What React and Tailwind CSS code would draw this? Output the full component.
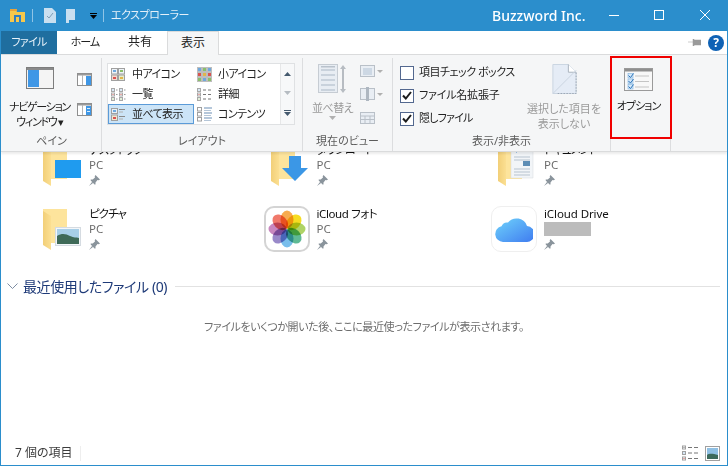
import React from 'react';

const FONT = 'font-["Noto_Sans","Noto_Sans_CJK_JP",sans-serif] [font-feature-settings:"palt"]';

const Group = ({ label, width, children }) => (
    <div className={`${width} mt-[3px] flex flex-col border-r border-[#dcdddf]`}>
        <div className="flex-1 flex min-h-0">{children}</div>
        <div className="h-[20px] text-center text-[11px] leading-[20px] text-[#5c5c5c]">{label}</div>
    </div>
);

const PaneBig = () => (
    <svg width="28" height="22" viewBox="0 0 28 22">
        <rect x="0.5" y="0.5" width="27" height="21" fill="#f4f4f4" stroke="#7d7d7d" />
        <rect x="1" y="1" width="26" height="2" fill="#8a8a8a" />
        <rect x="2" y="3" width="11" height="17" fill="#3f97e6" />
    </svg>
);

const PaneSmall = ({ lines }) => (
    <svg width="15" height="13" viewBox="0 0 15 13">
        <rect x="0.5" y="0.5" width="14" height="12" fill="#fff" stroke="#8f8f8f" />
        <rect x="1" y="1" width="13" height="1.5" fill="#9a9a9a" />
        <rect x="5" y="2" width="1" height="10" fill="#b5b5b5" />
        <rect x="9" y="3" width="5" height="9" fill="#3f97e6" />
        {lines && <rect x="10" y="5" width="3" height="1" fill="#d9ecfb" />}
        {lines && <rect x="10" y="8" width="3" height="1" fill="#d9ecfb" />}
    </svg>
);

const LayoutIcon = ({ kind }) => {
    const c = ['#6fa8dc', '#d9534f', '#8bbf6a', '#e0b64c'];
    if (kind === 'medium') {
        return (
            <svg width="14" height="13" viewBox="0 0 14 13">
                <rect x="0.5" y="0.5" width="6" height="5.5" fill="#eef3f8" stroke="#a0a0a0" />
                <rect x="7.5" y="0.5" width="6" height="5.5" fill="#eef3f8" stroke="#a0a0a0" />
                <rect x="0.5" y="7" width="6" height="5.5" fill="#f3d9d0" stroke="#a0a0a0" />
                <rect x="7.5" y="7" width="6" height="5.5" fill="#e6eccb" stroke="#a0a0a0" />
                <rect x="2" y="2" width="3" height="2" fill={c[0]} />
                <rect x="9" y="2" width="3" height="2" fill={c[2]} />
                <rect x="2" y="9" width="3" height="2" fill={c[1]} />
                <rect x="9" y="9" width="3" height="2" fill={c[3]} />
            </svg>
        );
    }
    if (kind === 'small') {
        return (
            <svg width="15" height="15" viewBox="0 0 15 15">
                <rect width="15" height="15" fill="#bdbdbd" />
                {[0, 1, 2].flatMap((r) => [0, 1, 2].map((k) => (
                    <rect key={`${r}${k}`} x={1 + k * 5} y={1 + r * 5} width="3" height="3" fill={c[(r + k * 2) % 4]} />
                )))}
            </svg>
        );
    }
    if (kind === 'list') {
        return (
            <svg width="15" height="13" viewBox="0 0 15 13">
                {[0, 8].map((x) => [0, 4.5, 9].map((y, i) => (
                    <g key={`${x}${y}`}>
                        <rect x={x + 0.5} y={y + 0.5} width="3" height="3" fill="#fff" stroke="#a8a8a8" />
                        <rect x={x + 1.5} y={y + 1.5} width="1" height="1" fill={c[i]} />
                        <rect x={x + 5} y={y + 1.5} width="1.5" height="1" fill="#999" />
                    </g>
                )))}
            </svg>
        );
    }
    if (kind === 'details') {
        return (
            <svg width="15" height="13" viewBox="0 0 15 13">
                {[0, 4.5, 9].map((y, i) => (
                    <g key={y}>
                        <rect x="0.5" y={y + 0.5} width="3" height="3" fill="#fff" stroke="#a8a8a8" />
                        <rect x="1.5" y={y + 1.5} width="1" height="1" fill={c[i]} />
                        <rect x="6" y={y + 1.5} width="3" height="1" fill="#777" />
                        <rect x="11" y={y + 1.5} width="3" height="1" fill="#777" />
                    </g>
                ))}
            </svg>
        );
    }
    if (kind === 'tiles') {
        return (
            <svg width="15" height="13" viewBox="0 0 15 13">
                <rect x="0.5" y="0.5" width="6" height="5" fill="#e8f0f7" stroke="#a0a0a0" />
                <rect x="0.5" y="7" width="6" height="5.5" fill="#f0e6cf" stroke="#a0a0a0" />
                <rect x="2" y="2" width="3" height="2" fill={c[0]} />
                <rect x="2" y="9" width="3" height="2" fill={c[1]} />
                <rect x="8" y="1" width="6" height="1" fill="#8a8a8a" />
                <rect x="8" y="3.5" width="4" height="1" fill="#b0b0b0" />
                <rect x="8" y="8" width="6" height="1" fill="#8a8a8a" />
                <rect x="8" y="10.5" width="4" height="1" fill="#b0b0b0" />
            </svg>
        );
    }
    return (
        <svg width="15" height="15" viewBox="0 0 15 15">
            {[0.5, 5.5, 10.5].map((y) => (
                <g key={y}>
                    <rect x="0.5" y={y} width="4" height="3.5" fill="#fff" stroke="#a0a0a0" />
                    <rect x="7" y={y} width="8" height="1" fill="#6d8fb5" />
                    <rect x="7" y={y + 2.5} width="7" height="1" fill="#b5c6d8" />
                </g>
            ))}
        </svg>
    );
};

const galleryItems = [
    ['medium', '中アイコン', false],
    ['small', '小アイコン', false],
    ['list', '一覧', false],
    ['details', '詳細', false],
    ['tiles', '並べて表示', true],
    ['content', 'コンテンツ', false],
];

const Gallery = () => (
    <div className="ml-[5px] mt-[5px] flex h-[62px] w-[188px] border border-[#dfe1e3] bg-white">
        <div className="grid w-[172px] grid-cols-2 grid-rows-3">
            {galleryItems.map(([kind, text, active]) => (
                <div
                    key={text}
                    className={`flex items-center border text-[11px] tracking-[-0.6px] text-[#222] ${active ? 'border-[#5b9bd8] bg-[#cce4f7]' : 'border-transparent'}`}
                >
                    <span className="flex w-[23px] shrink-0 justify-start pl-[2px]"><LayoutIcon kind={kind} /></span>
                    <span className="whitespace-nowrap">{text}</span>
                </div>
            ))}
        </div>
        <div className="flex w-[14px] flex-col items-center justify-around border-l border-[#e6e7e8] bg-[#f7f8f9]">
            <svg width="7" height="4" viewBox="0 0 7 4"><path d="M3.5 0 7 4H0z" fill="#44596e" /></svg>
            <svg width="7" height="4" viewBox="0 0 7 4"><path d="M0 0h7L3.5 4z" fill="#b6bcc2" /></svg>
            <svg width="7" height="6" viewBox="0 0 7 6"><path d="M0 0h7v1H0zM0 2h7L3.5 6z" fill="#44596e" /></svg>
        </div>
    </div>
);

const Check = ({ checked, label, tracking }) => (
    <div className="flex h-[23px] items-center">
        <span className="flex h-[14px] w-[14px] shrink-0 items-center justify-center border border-[#53688f] bg-white">
            {checked && (
                <svg width="10" height="9" viewBox="0 0 10 9"><path d="M1 4.5 3.8 7.5 9 1" fill="none" stroke="#1c1c1c" strokeWidth="2" /></svg>
            )}
        </span>
        <span className={`ml-[5px] whitespace-nowrap text-[11px] text-[#222] ${tracking}`}>{label}</span>
    </div>
);

const SortIcon = () => (
    <svg width="29" height="30" viewBox="0 0 29 30">
        <rect x="0.5" y="0.5" width="19" height="28" fill="#e8edf3" stroke="#c6ccd3" />
        {[5, 10, 15, 20, 25].map((y) => <rect key={y} x="3" y={y} width="14" height="2" fill="#c9d2dc" />)}
        <rect x="3" y="2" width="14" height="1.5" fill="#b9c2cc" />
        <path d="M25 1l3 4h-2v20h2l-3 4-3-4h2V5h-2z" fill="#b7bcc2" />
    </svg>
);

const ViewSmall = ({ kind }) => (
    <svg width="15" height="15" viewBox="0 0 15 15">
        <rect x="0.5" y={kind === 'cal' ? 2.5 : 1.5} width="14" height="11" fill="#e9eef4" stroke="#b9c0c8" />
        {kind === 'add' && <rect x="3" y="4" width="9" height="7" fill="#cdd8e4" />}
        {kind === 'col' && <rect x="6" y="0" width="3" height="14" fill="#aeb7c1" />}
        {kind === 'cal' && <path d="M1 6h13M5 6v7M10 6v7M1 9.5h13" stroke="#b9c0c8" fill="none" />}
    </svg>
);

const HideIcon = () => (
    <svg width="25" height="31" viewBox="0 0 25 31">
        <path d="M0.5 0.5h16l8 8v22h-24z" fill="#e5ecf6" stroke="#c9d3e0" />
        <path d="M16.5 .5v8h8" fill="#fff" stroke="#a9b2bd" />
        <path d="M.5 30.5 24.5 6.5" stroke="#c9d3e0" fill="none" />
        <path d="M24.5 9v21.500H4" stroke="#9aa5b2" strokeDasharray="1.500 1.500" fill="none" />
    </svg>
);

const OptionsIcon = () => (
    <svg width="29" height="23" viewBox="0 0 29 23">
        <rect x="0.5" y="0.5" width="28" height="22" fill="#f8f8f8" stroke="#9a9a9a" />
        <rect x="1" y="1" width="27" height="2.500" fill="#8f8f8f" />
        {[5.500, 11, 16.500].map((y) => (
            <g key={y}>
                <rect x="4" y={y} width="5" height="4.500" fill="#d6e8f8" stroke="#7fb2e0" strokeWidth="0.6" />
                <path d={`M4.500 ${y + 2}l2 2 3-4`} stroke="#2a73b8" fill="none" />
                <rect x="11" y={y + 2} width="14" height="1" fill="#c4c4c4" />
            </g>
        ))}
    </svg>
);

const Ribbon = () => (
    <div className="relative z-10 flex h-[98px] shrink-0 border-y border-[#dadbdc] bg-[#f5f6f7] pl-[1px] shadow-[0_2px_2px_rgba(0,0,0,0.08)]">
        <Group label="ペイン" width="w-[100px]">
            <div className="flex w-[75px] flex-col items-center pt-[9px]">
                <PaneBig />
                <div className="mt-[10px] whitespace-nowrap text-center text-[11px] leading-[15px] tracking-[-1.300px] text-[#222]">
                    ナビゲーション<br />ウィンドウ ▾
                </div>
            </div>
            <div className="flex flex-col gap-[17px] pt-[15px]">
                <PaneSmall />
                <PaneSmall lines />
            </div>
        </Group>
        <Group label="レイアウト" width="w-[201px]">
            <Gallery />
        </Group>
        <Group label="現在のビュー" width="w-[90px]">
            <div className="flex w-[56px] flex-col items-center pl-[3px] pt-[6px]">
                <SortIcon />
                <span className="mt-[6px] whitespace-nowrap text-[11px] leading-[15px] tracking-[-0.500px] text-[#9a9a9a]">並べ替え</span>
                <svg className="mt-[1px]" width="7" height="4" viewBox="0 0 7 4"><path d="M0 0h7L3.500 4z" fill="#b0b0b0" /></svg>
            </div>
            <div className="flex flex-col gap-[8px] pl-[1px] pt-[6px]">
                <div className="flex items-center gap-[2px]"><ViewSmall kind="add" /><svg width="6" height="3" viewBox="0 0 6 3"><path d="M0 0h6L3 3z" fill="#b0b0b0" /></svg></div>
                <div className="flex items-center gap-[2px]"><ViewSmall kind="col" /><svg width="6" height="3" viewBox="0 0 6 3"><path d="M0 0h6L3 3z" fill="#b0b0b0" /></svg></div>
                <ViewSmall kind="cal" />
            </div>
        </Group>
        <Group label="表示/非表示" width="w-[218px]">
            <div className="w-[128px] pl-[7px] pt-[3px]">
                <Check label="項目チェック ボックス" tracking="tracking-[-0.500px]" />
                <Check checked label="ファイル名拡張子" tracking="tracking-[-0.200px]" />
                <Check checked label="隠しファイル" tracking="tracking-[-0.800px]" />
            </div>
            <div className="flex w-[86px] flex-col items-center pt-[6px]">
                <HideIcon />
                <span className="mt-[7px] whitespace-nowrap text-center text-[11px] leading-[15px] text-[#9a9a9a]">
                    選択した項目を<br />表示しない
                </span>
            </div>
        </Group>
        <Group label="" width="w-[60px]">
            <div className="flex w-full flex-col items-center pr-[4px] pt-[10px]">
                <OptionsIcon />
                <span className="mt-[7px] whitespace-nowrap text-[11px] leading-[15px] tracking-[-0.900px] text-[#222]">オプション</span>
            </div>
        </Group>
        {/* red highlight drawn over the options button */}
        <div className="absolute left-[609px] top-[1px] h-[83px] w-[62px] border-2 border-[#f00000]" />
    </div>
);

const TitleBar = () => (
    <div className="flex h-[31px] shrink-0 items-center bg-[#2b8ecc] text-white">
        <svg className="ml-[9px]" width="15" height="13" viewBox="0 0 15 13">
            <path d="M0 1h6l1 2h8v10H0z" fill="#f6c84c" />
            <rect x="0" y="0" width="7" height="2" fill="#e8a33a" />
            <rect x="4" y="6" width="7" height="7" fill="#2f7fc4" />
            <rect x="6" y="8" width="3" height="5" fill="#f6c84c" />
        </svg>
        <span className="ml-[7px] h-[13px] w-[1px] bg-[#8fc4e6]" />
        <svg className="ml-[11px]" width="12" height="15" viewBox="0 0 12 15">
            <path d="M0 0h8l4 4v11H0z" fill="#c9dff0" />
            <path d="M3 8l2 2 4-5" stroke="#7f9db5" fill="none" />
        </svg>
        <svg className="ml-[10px]" width="10" height="14" viewBox="0 0 10 14">
            <path d="M0 0h9v11H3v3H0z" fill="#c9dff0" />
        </svg>
        <svg className="ml-[14px]" width="7" height="6" viewBox="0 0 7 6"><path d="M0 0h7v1H0zM0 2h7L3.500 6z" fill="#000" /></svg>
        <span className="ml-[6px] h-[13px] w-[1px] bg-[#8fc4e6]" />
        <span className="ml-[7px] w-[68px] shrink-0 whitespace-nowrap text-[11px] tracking-[-0.500px] text-[#e4f0f9]">エクスプローラー</span>
        <span className="ml-[313px] w-[92px] shrink-0 whitespace-nowrap text-[14px] font-medium">Buzzword Inc.</span>
        <svg className="ml-[25px] shrink-0" width="101" height="11" viewBox="0 0 101 11" fill="none" stroke="#fff">
            <path d="M0 5.500h10" />
            <rect x="45.500" y="0.500" width="9" height="9" />
            <path d="M91 0l10 10M101 0 91 10" />
        </svg>
    </div>
);

const Tabs = () => (
    <div className="flex h-[23px] shrink-0 items-stretch bg-white text-[11px] leading-[22px] text-[#222]">
        <div className="w-[56px] bg-[#1f6e9f] text-center tracking-[-0.700px] text-[#eaf3fa]">ファイル</div>
        <div className="w-[56px] text-center tracking-[-1px]">ホーム</div>
        <div className="w-[54px] text-center text-[12px]">共有</div>
        <div className="-mb-[1px] relative z-20 w-[52px] border-x border-t border-[#dadbdc] bg-[#f5f6f7] text-center text-[12px]">表示</div>
        <div className="flex flex-1 items-center justify-end pr-[3px]">
            <svg width="13" height="7" viewBox="0 0 13 7"><path d="M0 3h5M5 0h1v7H5zM6 1h7v5H6z" fill="#9a9a9a" stroke="#9a9a9a" strokeWidth="0.5" /></svg>
            <span className="ml-[7px] flex h-[16px] w-[16px] items-center justify-center rounded-full bg-[#0f62b5] text-[12px] font-bold leading-none text-white">?</span>
        </div>
    </div>
);

const Folder = ({ overlay }) => (
    <svg className="ml-[7px]" width="38" height="41" viewBox="0 0 38 41">
        <defs>
            <linearGradient id="flap" x1="0" y1="0" x2="1" y2="0">
                <stop offset="0" stopColor="#f2cf78" />
                <stop offset="1" stopColor="#fbdf92" />
            </linearGradient>
        </defs>
        <path d="M0 0h24v34H0z" fill="#fde49c" />
        <path d="M0 2 8 7v34L0 36z" fill="url(#flap)" />
        {overlay === 'desktop' && <rect x="12" y="15" width="26" height="18" fill="#1f9bef" />}
        {overlay === 'download' && <path d="M18 11h12v12h7L24 36 11 23h7z" fill="#3b97e6" />}
        {overlay === 'docs' && (
            <g>
                <path d="M13 0h17l5 5v28H13z" fill="#f2f5f8" stroke="#d4d8dd" strokeWidth="0.5" />
                <path d="M16 5l3-3v6z" fill="#4a8fd0" />
                <path d="M16 12h16M16 15h16M16 24h16M16 27h16M16 30h16" stroke="#b7c3cf" />
                <rect x="25" y="16" width="7" height="5" fill="#5d8db5" />
            </g>
        )}
        {overlay === 'pictures' && (
            <g>
                <rect x="12.500" y="18.500" width="25" height="18" fill="#f3f6f9" stroke="#d5dbe1" />
                <rect x="14" y="20" width="22" height="15" fill="#a8cfe8" />
                <path d="M14 27c5-3 9-2 13 0s6 1 9 2v6H14z" fill="#3f6a58" />
            </g>
        )}
    </svg>
);

const Photos = () => {
    const colors = ['#f7a23b', '#f5d90a', '#a6cf55', '#4db38a', '#6ab7ea', '#8e7cc3', '#c27ab8', '#ef6a5b'];
    return (
        <div className="flex h-[46px] w-[46px] items-center justify-center rounded-[10px] border-2 border-[#d4d4d4] bg-white">
            <svg width="38" height="38" viewBox="-19 -19 38 38">
                {colors.map((c, i) => (
                    <ellipse key={c} cx="0" cy="-9.500" rx="6.500" ry="9" fill={c} opacity="0.9" transform={`rotate(${i * 45})`} style={{ mixBlendMode: 'multiply' }} />
                ))}
            </svg>
        </div>
    );
};

const CloudIcon = () => (
    <div className="flex h-[46px] w-[46px] items-center justify-center rounded-[10px] border border-[#efefef] bg-white">
        <svg width="38" height="26" viewBox="0 0 38 26">
            <defs>
                <linearGradient id="cloud" x1="0" y1="0" x2="1" y2="1">
                    <stop offset="0" stopColor="#6fd3fb" />
                    <stop offset="1" stopColor="#3f7bf0" />
                </linearGradient>
            </defs>
            <path d="M8 26a8 8 0 0 1-1.500-15.800A6 6 0 0 1 13 6.500 11 11 0 0 1 32 10a8 8 0 0 1-1 16z" fill="url(#cloud)" />
        </svg>
    </div>
);

const PinIcon = () => (
    <svg width="11" height="11" viewBox="0 0 11 11">
        <path d="M6.500 0 11 4.500 9.800 5.300 8.500 5 6.500 7.500 6.500 9.500 5.500 9.500 1.700 5.500 1.700 4.500 3.700 4.500 6 2.500 5.700 1.200z M3 7 0 11 4 8z" fill="#8a949c" />
    </svg>
);

const items = [
    { key: 'desktop', icon: <Folder overlay="desktop" />, name: 'デスクトップ', sub: 'PC', tracking: 'tracking-[-1px]' },
    { key: 'download', icon: <Folder overlay="download" />, name: 'ダウンロード', sub: 'PC', tracking: 'tracking-[-1px]' },
    { key: 'docs', icon: <Folder overlay="docs" />, name: 'ドキュメント', sub: 'PC', tracking: 'tracking-[-1px]' },
    { key: 'pictures', icon: <Folder overlay="pictures" />, name: 'ピクチャ', sub: 'PC', tracking: 'tracking-[-1px]' },
    { key: 'photos', icon: <Photos />, name: 'iCloud フォト', sub: 'PC', tracking: 'tracking-[-0.400px]' },
    { key: 'drive', icon: <CloudIcon />, name: 'iCloud Drive', sub: null, tracking: 'tracking-[-0.100px]' },
];

const QuickItem = ({ icon, name, sub, tracking }) => (
    <div className="flex h-[64px] gap-[7px]">
        <div className="flex h-[46px] w-[46px] items-center">{icon}</div>
        <div className="text-[11.500px] leading-[15px]">
            <div className={`whitespace-nowrap text-[#111] ${tracking}`}>{name}</div>
            {sub
                ? <div className="text-[#6d6d6d]">{sub}</div>
                : <div className="my-[1px] h-[14px] w-[47px] bg-[#bcbcbc]" />}
            <div className="mt-[3px]"><PinIcon /></div>
        </div>
    </div>
);

const StatusBar = () => (
    <div className="flex h-[24px] shrink-0 items-center bg-white pl-[14px] pr-[7px] text-[12px] text-[#3c3c3c]">
        <span className="w-[65px] whitespace-nowrap">7 個の項目</span>
        <span className="h-[15px] w-[1px] bg-[#eeeeee]" />
        <div className="ml-auto flex items-center gap-[7px]">
            <svg width="16" height="16" viewBox="0 0 16 16">
                {[1, 6.500, 12].map((y, i) => (
                    <g key={y}>
                        <rect x="0.500" y={y} width="3" height="3" fill="#fff" stroke="#a0a0a0" />
                        <rect x="1.500" y={y + 1} width="1" height="1" fill={['#777', '#5a9bd8', '#d9534f'][i]} />
                        <path d={`M6 ${y + 1.500}h4M12 ${y + 1.500}h4`} stroke="#777" fill="none" />
                    </g>
                ))}
            </svg>
            <svg width="15" height="15" viewBox="0 0 15 15">
                <rect x="0.500" y="0.500" width="14" height="14" fill="#fff" stroke="#a0a0a0" />
                <rect x="2" y="2" width="11" height="11" fill="#8fc0e4" />
                <path d="M2 9c3-2 6-1 11 0v4H2z" fill="#3c6a5c" />
            </svg>
        </div>
    </div>
);

export default function App() {
    return (
        <div className={`flex h-[466px] w-[728px] flex-col overflow-hidden border-x border-b border-[#2b8ecc] bg-white ${FONT}`}>
            <TitleBar />
            <Tabs />
            <Ribbon />
            <main className="min-h-0 flex-1">
                <div className="-mt-[10px] grid grid-cols-[227.500px_227.500px_227.500px] pl-[35px]">
                    {items.map((item) => <QuickItem key={item.key} {...item} />)}
                </div>
                <div className="mt-[7px] flex h-[18px] items-center pl-[6px] pr-[7px]">
                    <svg width="11" height="6" viewBox="0 0 11 6"><path d="M.5.500 5.500 5.500 10.500.500" fill="none" stroke="#7d8da3" /></svg>
                    <span className="ml-[5px] whitespace-nowrap text-[14px] tracking-[-0.400px] text-[#1e3a78]">最近使用したファイル (0)</span>
                    <span className="ml-[8px] h-[1px] flex-1 bg-[#e2e2e2]" />
                </div>
                <p className="mt-[23px] text-center text-[11px] leading-[18px] tracking-[-0.400px] text-[#6d6d6d]">
                    ファイルをいくつか開いた後、ここに最近使ったファイルが表示されます。
                </p>
            </main>
            <StatusBar />
        </div>
    );
}
